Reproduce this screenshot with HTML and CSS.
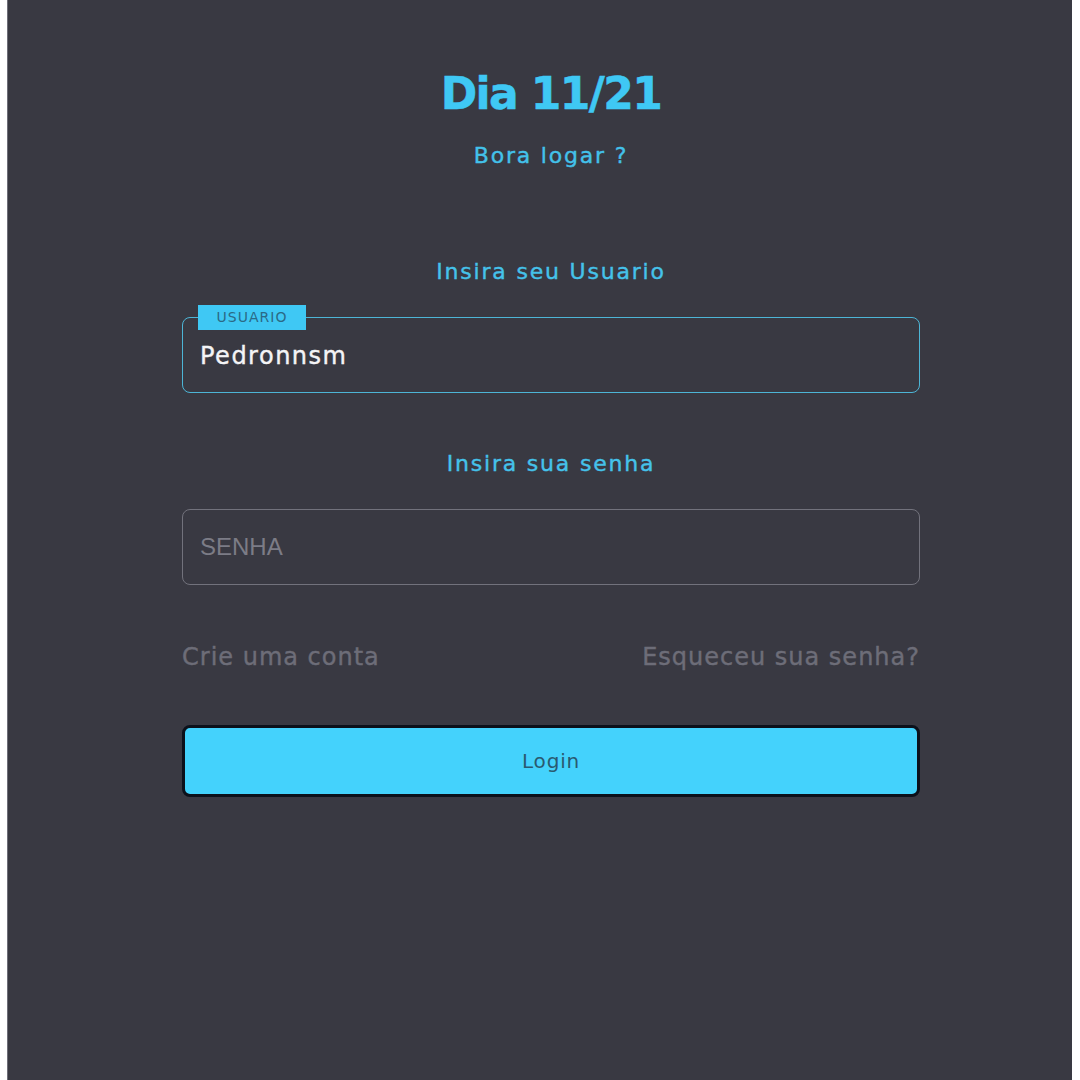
FILE: index.html
```html
<!DOCTYPE html>
<html lang="pt-BR">
<head>
<meta charset="utf-8">
<title>Dia 11/21</title>
<link rel="stylesheet" href="styles.css">
</head>
<body>
<main class="panel">
  <div class="content">
    <header class="head">
      <h1 class="title">Dia 11/21</h1>
      <p class="subtitle">Bora logar ?</p>
    </header>

    <section class="field">
      <p class="prompt">Insira seu Usuario</p>
      <div class="box box-active">
        <span class="tag">USUARIO</span>
        <span class="value">Pedronnsm</span>
      </div>
    </section>

    <section class="field field-second">
      <p class="prompt">Insira sua senha</p>
      <div class="box">
        <span class="placeholder">SENHA</span>
      </div>
    </section>

    <div class="links">
      <a class="link">Crie uma conta</a>
      <a class="link">Esqueceu sua senha?</a>
    </div>

    <button class="login" type="button">Login</button>
  </div>
</main>
</body>
</html>
```

FILE: styles.css
```css
html, body {
  margin: 0;
  padding: 0;
  background: #ffffff;
  height: 100%;
}

body {
  font-family: "DejaVu Sans", "Noto Sans", sans-serif;
}

.panel {
  margin-left: 7px;
  width: 1065px;
  height: 1080px;
  background: #393942;
  border-left: 1px solid #6e6e78;
  box-sizing: border-box;
  overflow: hidden;
}

.content {
  margin-left: 174px;
  width: 738px;
  padding-top: 62px;
  display: flex;
  flex-direction: column;
}

.head {
  display: flex;
  flex-direction: column;
  align-items: center;
}

.title {
  margin: 0;
  font-size: 44px;
  line-height: 64px;
  font-weight: 700;
  color: #3fc8f4;
  letter-spacing: -1.6px;
  -webkit-text-stroke: 0.5px #3fc8f4;
}

.subtitle {
  margin: 15px 0 0;
  font-size: 22px;
  line-height: 30px;
  color: #43c1ea;
  letter-spacing: 1.8px;
  -webkit-text-stroke: 0.4px #43c1ea;
}

.field {
  display: flex;
  flex-direction: column;
  margin-top: 86px;
}

.field-second {
  margin-top: 56px;
}

.prompt {
  margin: 0 0 30px;
  text-align: center;
  font-size: 22px;
  line-height: 30px;
  color: #45c2ea;
  letter-spacing: 1.8px;
  -webkit-text-stroke: 0.4px #45c2ea;
}

.box {
  position: relative;
  height: 76px;
  border: 1.5px solid #72727c;
  border-radius: 8px;
  box-sizing: border-box;
  display: flex;
  align-items: center;
  padding: 0 17px;
}

.box-active {
  border-color: #4db5d6;
}

.tag {
  position: absolute;
  top: -13px;
  left: 15px;
  width: 108px;
  height: 25px;
  background: #3fc8f4;
  color: #2b6a86;
  font-size: 14px;
  line-height: 25px;
  letter-spacing: 1px;
  text-align: center;
}

.value {
  font-size: 24px;
  color: #f4f4f6;
  letter-spacing: 1.5px;
  margin-top: 2px;
  -webkit-text-stroke: 0.4px #f4f4f6;
}

.placeholder {
  font-family: "Liberation Sans", Arial, sans-serif;
  font-size: 24px;
  color: #7c7c86;
}

.links {
  display: flex;
  justify-content: space-between;
  margin-top: 55px;
}

.link {
  font-size: 24px;
  line-height: 34px;
  color: #6d6d78;
  letter-spacing: 1px;
  -webkit-text-stroke: 0.4px #6d6d78;
  cursor: pointer;
}

.login {
  margin-top: 51px;
  height: 72px;
  width: 100%;
  background: #44d2fc;
  border: 3px solid #0c111b;
  border-radius: 8px;
  font-family: "DejaVu Sans", "Noto Sans", sans-serif;
  font-size: 20px;
  letter-spacing: 0.8px;
  color: #2a5a70;
  cursor: pointer;
}
```
